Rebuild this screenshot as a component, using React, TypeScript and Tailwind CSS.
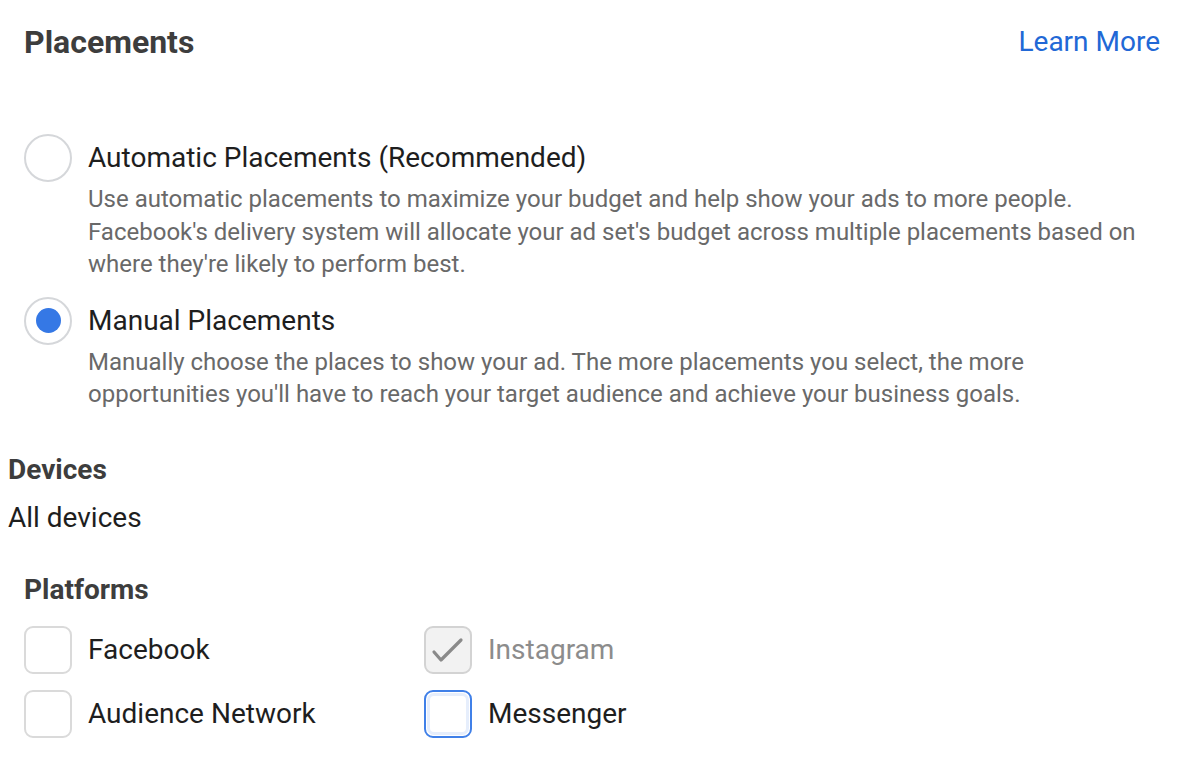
import React from "react";

function Radio({ checked }: { checked?: boolean }) {
  return (
    <div className="w-[48px] h-[48px] rounded-full border-2 border-[#d5d7da] bg-white flex items-center justify-center shrink-0">
      {checked && <div className="w-[25px] h-[25px] rounded-full bg-[#3578e5]" />}
    </div>
  );
}

function Checkbox({ state }: { state?: "disabled-checked" | "focus" }) {
  if (state === "disabled-checked") {
    return (
      <div className="w-[48px] h-[48px] rounded-[9px] border-2 border-[#d3d3d3] bg-[#f2f2f2] shrink-0">
        <svg width="44" height="44" viewBox="0 0 44 44" fill="none">
          <path d="M8 24 L15 32 L35 12" stroke="#8a8a8a" strokeWidth="3.2" strokeLinecap="round" strokeLinejoin="round" />
        </svg>
      </div>
    );
  }
  if (state === "focus") {
    return (
      <div className="w-[48px] h-[48px] rounded-[9px] border-2 border-[#4080e8] bg-white p-[1px] shrink-0">
        <div className="w-full h-full rounded-[7px] border-[3px] border-[#e6eefc]" />
      </div>
    );
  }
  return <div className="w-[48px] h-[48px] rounded-[9px] border-2 border-[#dadada] bg-white shrink-0" />;
}

export default function App() {
  return (
    <div className="w-[1180px] h-[776px] bg-white overflow-hidden" style={{ fontFamily: "Roboto, 'Liberation Sans', sans-serif" }}>
      <div className="flex items-center justify-between pl-[24px] pr-[20px] pt-[24px]">
        <div className="text-[32px] leading-[36px] font-bold text-[#3d3d3d]">Placements</div>
        <div className="text-[28px] leading-[36px] text-[#2168d6]">Learn More</div>
      </div>

      <div className="pl-[24px] pr-[20px] mt-[74px]">
        <div className="flex gap-[16px]">
          <Radio />
          <div className="pt-[8px]">
            <div className="text-[28px] leading-[32px] text-[#1e1e1e]">Automatic Placements (Recommended)</div>
            <div className="mt-[9px] text-[24px] leading-[32.5px] text-[#696969] w-[1068px]">
              Use automatic placements to maximize your budget and help show your ads to more people. Facebook's delivery system will allocate your ad set's budget across multiple placements based on where they're likely to perform best.
            </div>
          </div>
        </div>

        <div className="flex gap-[16px] mt-[16px]">
          <Radio checked />
          <div className="pt-[8px]">
            <div className="text-[28px] leading-[32px] text-[#1e1e1e]">Manual Placements</div>
            <div className="mt-[9px] text-[24px] leading-[32.5px] text-[#696969] w-[1068px]">
              Manually choose the places to show your ad. The more placements you select, the more opportunities you'll have to reach your target audience and achieve your business goals.
            </div>
          </div>
        </div>
      </div>

      <div className="pl-[8px] mt-[43px]">
        <div className="text-[28px] leading-[32px] font-bold text-[#3d3d3d]">Devices</div>
        <div className="mt-[16px] text-[28px] leading-[32px] text-[#1e1e1e]">All devices</div>
      </div>

      <div className="pl-[24px] mt-[40px]">
        <div className="text-[28px] leading-[32px] font-bold text-[#3d3d3d]">Platforms</div>
        <div className="mt-[20px] grid grid-cols-[400px_400px] gap-y-[16px]">
          <div className="flex items-center gap-[16px]">
            <Checkbox />
            <span className="text-[28px] leading-[32px] text-[#1e1e1e]">Facebook</span>
          </div>
          <div className="flex items-center gap-[16px]">
            <Checkbox state="disabled-checked" />
            <span className="text-[28px] leading-[32px] text-[#8c8c8c]">Instagram</span>
          </div>
          <div className="flex items-center gap-[16px]">
            <Checkbox />
            <span className="text-[28px] leading-[32px] text-[#1e1e1e]">Audience Network</span>
          </div>
          <div className="flex items-center gap-[16px]">
            <Checkbox state="focus" />
            <span className="text-[28px] leading-[32px] text-[#1e1e1e]">Messenger</span>
          </div>
        </div>
      </div>
    </div>
  );
}
